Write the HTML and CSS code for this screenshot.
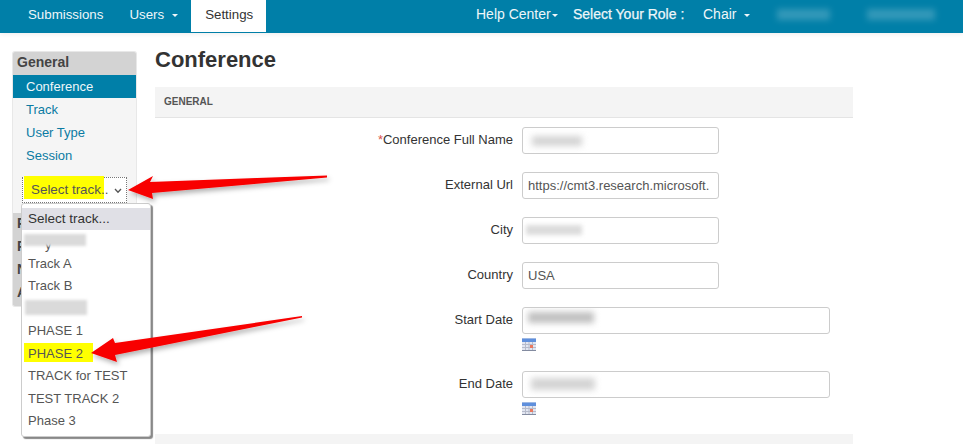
FILE: index.html
```html
<!DOCTYPE html>
<html lang="en">
<head>
<meta charset="utf-8">
<title>Conference</title>
<link rel="stylesheet" href="styles.css">
</head>
<body>
<nav class="navbar">
  <ul class="nav-left">
    <li class="nav-item">Submissions</li>
    <li class="nav-item">Users<span class="caret caret-gap"></span></li>
    <li class="nav-item active">Settings</li>
  </ul>
  <ul class="nav-right">
    <li class="nav-help">Help Center<span class="caret"></span></li>
    <li class="nav-role">Select Your Role :</li>
    <li class="nav-chair">Chair<span class="caret caret-gap"></span></li>
    <li class="blur-nav blur-nav-a"></li>
    <li class="blur-nav blur-nav-b"></li>
  </ul>
</nav>
<div class="page">
  <aside class="sidebar">
    <div class="side-head">General</div>
    <a class="side-link current">Conference</a>
    <a class="side-link">Track</a>
    <a class="side-link">User Type</a>
    <a class="side-link">Session</a>
    <div class="track-select">
      <span class="track-mark"></span>
      <span class="track-text">Select track..</span>
      <svg class="chevron" width="8" height="6" viewBox="0 0 8 6"><path d="M1 1l3 3.300L7 1" fill="none" stroke="#555" stroke-width="1.300"/></svg>
    </div>
    <div class="side-rest">
      <div class="side-head">P</div>
      <div class="side-head">P</div>
      <div class="side-head">N</div>
      <div class="side-head">A</div>
    </div>
  </aside>
  <main class="main">
    <h1 class="title">Conference</h1>
    <div class="section-head">GENERAL</div>
    <form class="form">
      <div class="row"><label class="label"><span class="req">*</span>Conference Full Name</label><div class="input narrow"><span class="blur blur-name"></span></div></div>
      <div class="row"><label class="label">External Url</label><div class="input narrow url">https://cmt3.research.microsoft.</div></div>
      <div class="row"><label class="label">City</label><div class="input narrow"><span class="blur blur-city"></span></div></div>
      <div class="row"><label class="label">Country</label><div class="input narrow">USA</div></div>
      <div class="row row-date"><label class="label">Start Date</label><div class="date-col"><div class="input wide"><span class="blur blur-start"></span></div>
        <svg class="cal" width="14" height="13" viewBox="0 0 14 13"><rect width="14" height="13" fill="#e2e6f1"/><rect width="14" height="4" fill="#5f8fdc"/><rect width="14" height="1" fill="#9db8e4"/><path d="M0 6.500h14M0 9.500h14M3.500 4v9M7 4v9M10.500 4v9" stroke="#b6bbcb" stroke-width="1"/><rect y="12" width="14" height="1" fill="#838ba0"/><rect x="8" y="7" width="3" height="3" fill="#e9795f"/></svg></div></div>
      <div class="row"><label class="label">End Date</label><div class="date-col"><div class="input wide"><span class="blur blur-end"></span></div>
        <svg class="cal" width="14" height="13" viewBox="0 0 14 13"><rect width="14" height="13" fill="#e2e6f1"/><rect width="14" height="4" fill="#5f8fdc"/><rect width="14" height="1" fill="#9db8e4"/><path d="M0 6.500h14M0 9.500h14M3.500 4v9M7 4v9M10.500 4v9" stroke="#b6bbcb" stroke-width="1"/><rect y="12" width="14" height="1" fill="#838ba0"/><rect x="8" y="7" width="3" height="3" fill="#e9795f"/></svg></div></div>
    </form>
    <div class="section-foot"></div>
  </main>
</div>
<ul class="dropdown">
  <li class="opt opt-selected">Select track...</li>
  <li class="opt opt-hidden"><span class="hidden-y">y</span><span class="blur blur-o1"></span></li>
  <li class="opt">Track A</li>
  <li class="opt">Track B</li>
  <li class="opt opt-hidden"><span class="blur blur-o2"></span></li>
  <li class="opt">PHASE 1</li>
  <li class="opt"><span class="mark">PHASE 2</span></li>
  <li class="opt">TRACK for TEST</li>
  <li class="opt">TEST TRACK 2</li>
  <li class="opt">Phase 3</li>
</ul>
<svg class="arrows" width="963" height="444" viewBox="0 0 963 444">
  <defs><filter id="sh" x="-10%" y="-50%" width="120%" height="200%"><feDropShadow dx="2" dy="3" stdDeviation="2.500" flood-color="#000" flood-opacity=".3"/></filter></defs>
  <path filter="url(#sh)" fill="#f80000" d="M128 190L153 176L150 182L327 175.500L327 177.500L152 193L153 199Z"/>
  <path filter="url(#sh)" fill="#f80000" d="M91 353L113 338L115 343L302 316L302 317.500L115 355L117 362Z"/>
</svg>
</body>
</html>
```
FILE: styles.css
```css
* { box-sizing: border-box; }
html, body { margin: 0; padding: 0; }
body {
  width: 963px;
  height: 444px;
  overflow: hidden;
  position: relative;
  background: #fff;
  font-family: "Liberation Sans", Arial, sans-serif;
  font-size: 13px;
  color: #333;
}
ul { list-style: none; margin: 0; padding: 0; }
.navbar {
  height: 33px;
  background: #007fa8;
  color: #eef6f9;
  display: flex;
  justify-content: space-between;
  box-shadow: 0 1px 5px rgba(0,0,0,.08);
}
.nav-left, .nav-right { display: flex; align-items: flex-start; }
.nav-left { padding-left: 15px; font-size: 13.300px; }
.nav-item { padding: 0 13px; height: 32px; line-height: 29px; }
.nav-item.active { background: #fff; color: #333; padding: 0 14px; width: 75px; }
.caret {
  display: inline-block;
  width: 0; height: 0;
  margin-left: 1px;
  vertical-align: middle;
  border-top: 3px solid #eef6f9;
  border-left: 3px solid transparent;
  border-right: 3px solid transparent;
}
.caret-gap { margin-left: 8px; }
.nav-right { line-height: 29px; padding-right: 28px; font-size: 14px; }
.nav-help { width: 97px; }
.nav-role { width: 130px; -webkit-text-stroke: .25px #eef6f9; }
.nav-chair { width: 74px; }
.blur-nav { height: 11px; margin-top: 9px; background: rgba(255,255,255,.2); filter: blur(3px); }
.blur-nav-a { width: 53px; margin-right: 37px; }
.blur-nav-b { width: 68px; }

.page { display: flex; align-items: flex-start; padding: 19px 0 0 13px; }
.sidebar {
  width: 123px;
  height: 254px;
  background: #f5f5f5;
  border-radius: 2px;
  display: flex;
  flex-direction: column;
  overflow: hidden;
  box-shadow: 0 0 0 1px #e8e8e8;
}
.side-head {
  height: 23px;
  line-height: 21px;
  padding-left: 4px;
  background: #d3d3d3;
  font-weight: bold;
  font-size: 14px;
  color: #444;
  flex: none;
}
.side-link {
  height: 23px;
  line-height: 23px;
  padding-left: 13px;
  color: #0b7ba3;
  flex: none;
}
.side-link.current { background: #007fa8; color: #eef6f9; }
.track-select {
  margin: 10px 0 0 9px;
  width: 105px;
  height: 26px;
  flex: none;
  position: relative;
  background: #fff;
  border: 1px dotted #777;
  display: flex;
  align-items: center;
}
.track-mark { position: absolute; left: 1px; top: -2px; width: 80px; height: 23px; background: #ffff00; }
.track-text { position: relative; padding: 0 0 1px 8px; color: #555; white-space: nowrap; font-size: 13.400px; }
.chevron { position: absolute; right: 4px; top: 10px; }
.side-rest { margin-top: 10px; flex: 1; background: #d3d3d3; }

.main { margin-left: 19px; width: 698px; }
.title { margin: 0; height: 35px; font-size: 22px; line-height: 16px; font-weight: bold; color: #333; }
.section-head {
  height: 31px;
  line-height: 30px;
  padding-left: 9px;
  background: #f4f4f4;
  border-bottom: 1px solid #e4e4e4;
  font-size: 10px;
  font-weight: bold;
  color: #555;
}
.form { padding-top: 9px; }
.row { display: flex; align-items: flex-start; margin-bottom: 18px; height: 27px; }
.row-date { margin-bottom: 37px; }
.label { width: 358px; text-align: right; line-height: 25px; color: #333; flex: none; }
.req { color: #d9534f; }
.input {
  margin-left: 9px;
  height: 27px;
  border: 1px solid #ccc;
  border-radius: 3px;
  padding: 0 5px;
  line-height: 25px;
  color: #555;
  background: #fff;
  overflow: hidden;
  white-space: nowrap;
  position: relative;
  flex: none;
}
.narrow { width: 197px; }
.wide { width: 308px; }
.url { padding-right: 0; }
.date-col { display: flex; flex-direction: column; }
.cal { margin: 4px 0 0 9px; display: block; }
.blur { display: block; background: #d4d4d4; filter: blur(3px); height: 10px; }
.blur-name { width: 50px; margin: 8px 0 0 4px; }
.blur-city { width: 56px; margin: 7px 0 0 -2px; height: 10px; filter: blur(2px); background: #dcdcdc; }
.blur-start { width: 66px; margin: 4px 0 0 0; height: 11px; background: #c0c0c0; }
.blur-end { width: 64px; margin: 6px 0 0 3px; height: 12px; }
.section-foot { height: 30px; background: #f4f4f4; position: absolute; width: 698px; top: 434px; }

.dropdown {
  position: absolute;
  left: 21px;
  top: 203px;
  width: 130px;
  height: 234px;
  padding-top: 4px;
  background: #fff;
  border: 1px solid #ccc;
  border-radius: 3px;
  box-shadow: 2px 2px 1px #888;
}
.opt { height: 22.500px; line-height: 22px; padding-left: 6px; color: #555; position: relative; }
.opt-selected { height: 22px; background: #e0e0e6; color: #333; font-size: 13.500px; }
.mark { background: #ffff00; display: block; width: 69px; margin-left: -4px; padding-left: 4px; height: 19px; line-height: 22px; }
.hidden-y { position: absolute; left: 23px; top: 4px; }
.blur-o1 { position: absolute; left: 2px; top: 4px; width: 62px; height: 12px; background: #dadada; filter: blur(1.500px); }
.blur-o2 { position: absolute; left: 3px; top: 2px; width: 62px; height: 15px; background: #dadada; filter: blur(1.500px); }
.arrows { position: absolute; left: 0; top: 0; pointer-events: none; }
```
